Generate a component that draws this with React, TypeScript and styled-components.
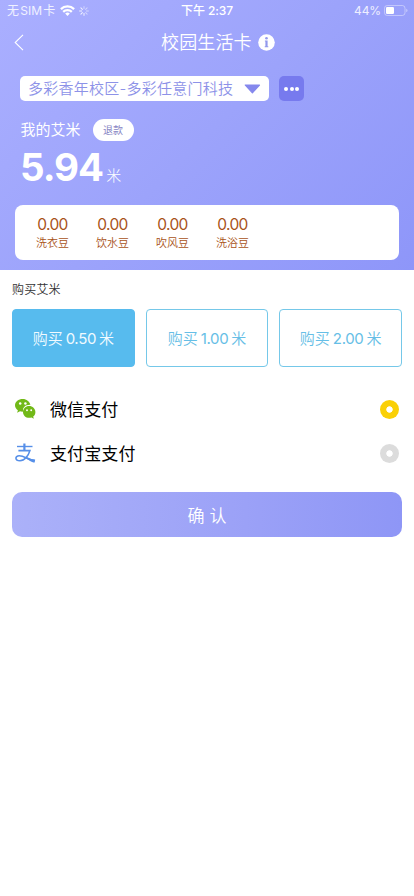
import React, { useState } from 'react';
import styled, { createGlobalStyle } from 'styled-components';

const GlobalStyle = createGlobalStyle`
  * { box-sizing: border-box; }
  body {
    margin: 0;
    background: #fff;
    font-family: Inter, "Noto Sans CJK SC", sans-serif;
  }
  button { font: inherit; border: 0; padding: 0; background: none; color: inherit; }
`;

const Screen = styled.main`
  width: 414px;
  height: 896px;
  background: #fff;
  white-space: nowrap;
  overflow: hidden;
`;

const Hero = styled.header`
  height: 270px;
  color: #fff;
  background: linear-gradient(135deg, #aaafff 0%, #9ca3fb 50%, #8e96f9 100%);
`;

const StatusBar = styled.div`
  height: 21px;
  padding: 0 6px 0 7px;
  display: grid;
  grid-template-columns: 174px auto 1fr;
  align-items: center;
  font-size: 12px;
  line-height: 20px;
`;

const Carrier = styled.div`
  display: flex;
  align-items: center;
  gap: 4px;
  color: #f0f1ff;
`;

const CarrierName = styled.span`
  width: 49px;
  letter-spacing: 0.1px;
  word-spacing: -2.4px;
`;

const Clock = styled.time`
  font-weight: 500;
  letter-spacing: -0.1px;
`;

const Power = styled.div`
  display: flex;
  justify-content: flex-end;
  align-items: center;
  gap: 3px;
  color: #eeefff;
  letter-spacing: -0.1px;
`;

const NavBar = styled.nav`
  height: 43px;
  padding: 0 14px;
  display: grid;
  grid-template-columns: 147px auto 1fr;
  align-items: center;
`;

const Title = styled.h1`
  margin: 0;
  display: flex;
  align-items: center;
  gap: 6px;
  font-size: 18px;
  font-weight: 350;
  line-height: 29px;
  letter-spacing: 0.15px;
`;

const CampusRow = styled.div`
  margin: 12px 0 0 20px;
  display: flex;
  gap: 10px;
`;

const CampusSelect = styled.button`
  width: 249px;
  height: 25px;
  padding: 1px 8px 0;
  display: flex;
  align-items: center;
  justify-content: space-between;
  border-radius: 5px;
  background: #fff;
  color: #8d92e8;
  font-size: 15px;
  font-weight: 350;
  line-height: 24px;
  letter-spacing: 0.25px;
`;

const MoreButton = styled.button`
  width: 25px;
  height: 25px;
  padding-top: 1px;
  display: flex;
  align-items: center;
  justify-content: center;
  gap: 1.5px;
  border-radius: 5px;
  background: #777aee;
`;

const Dot = styled.i`
  width: 4px;
  height: 4px;
  border-radius: 50%;
  background: #fff;
`;

const BalanceHeading = styled.div`
  margin: 18px 0 0 20.5px;
  height: 22px;
  display: flex;
  align-items: center;
  gap: 12px;
  font-size: 15px;
  line-height: 22px;
`;

const RefundButton = styled.button`
  width: 41px;
  height: 22px;
  border-radius: 11px;
  background: #fff;
  color: #8886c4;
  font-size: 10px;
  line-height: 22px;
`;

const Balance = styled.div`
  margin: 5px 0 0 20px;
  height: 42px;
  display: flex;
  align-items: baseline;
  gap: 3px;
  line-height: 42px;
`;

const Amount = styled.strong`
  font-size: 38.5px;
  font-weight: 700;
  letter-spacing: -1px;
`;

const Unit = styled.span`
  font-size: 15px;
  font-weight: 300;
`;

const BeanCard = styled.section`
  margin: 17px 15px 0;
  height: 55px;
  padding: 10px 0 0 7.5px;
  display: flex;
  border-radius: 8px;
  background: #fff;
  color: #a85217;
`;

const Bean = styled.div`
  width: 60px;
  display: flex;
  flex-direction: column;
  align-items: center;
`;

const BeanValue = styled.span`
  font-size: 15.5px;
  line-height: 20px;
  letter-spacing: -0.6px;
`;

const BeanName = styled.span`
  font-size: 11px;
  font-weight: 350;
  line-height: 16px;
`;

const Body = styled.section`
  padding: 10px 12px 0;
`;

const SectionTitle = styled.h2`
  margin: 0;
  font-size: 12px;
  font-weight: 350;
  line-height: 19px;
  letter-spacing: 0.2px;
  color: #333;
`;

const Packs = styled.div`
  margin-top: 10px;
  display: grid;
  grid-template-columns: repeat(3, 1fr);
  gap: 11px;
`;

const Pack = styled.button<{ $active: boolean }>`
  height: 58px;
  padding-top: 1px;
  display: flex;
  align-items: center;
  justify-content: center;
  gap: 3px;
  border: 1px solid ${p => (p.$active ? '#57bbee' : '#75c8e9')};
  border-radius: 4px;
  background: ${p => (p.$active ? '#57bbee' : '#fff')};
  color: ${p => (p.$active ? '#f0faff' : '#66bee6')};
  font-size: 15px;
  font-weight: 350;
  line-height: 21px;
`;

const PackValue = styled.span`
  font-weight: 400;
  letter-spacing: -0.35px;
`;

const PayList = styled.div`
  margin-top: 20px;
`;

const PayRow = styled.button`
  width: 100%;
  height: 44px;
  padding: 0 3px 0 2px;
  display: flex;
  align-items: center;
  color: #000;
  font-size: 17px;
  line-height: 24px;
`;

const PayLabel = styled.span`
  margin-left: 13px;
  flex: 1;
  text-align: left;
  padding-top: 1px;
  letter-spacing: 0.1px;
`;

const Radio = styled.span<{ $on: boolean }>`
  width: 19px;
  height: 19px;
  border-radius: 50%;
  background: radial-gradient(circle, #fff 2.8px, ${p => (p.$on ? '#fad006' : '#dcdcdc')} 3.6px);
`;

const Confirm = styled.button`
  margin-top: 17px;
  width: 100%;
  height: 45px;
  border-radius: 10px;
  background: linear-gradient(90deg, #abb1f9, #9ba1f7 60%, #8e96f6);
  color: #fff;
  font-size: 17px;
  font-weight: 350;
  word-spacing: 0.3px;
`;

const WifiIcon = () => (
  <svg width="15" height="11" viewBox="0 0 15 11" fill="none" stroke="#fff" strokeWidth="2.3">
    <path d="M.9 4.1a9.5 9.5 0 0 1 13.2 0M3.2 6.9a6.2 6.2 0 0 1 8.6 0" />
    <path d="M7.5 11 5.2 8.6a3.3 3.3 0 0 1 4.6 0z" fill="#fff" stroke="none" />
  </svg>
);

const Spinner = () => (
  <svg width="10" height="10" viewBox="-5 -5 10 10" stroke="#fff" strokeWidth="1" strokeLinecap="round">
    {[0, 45, 90, 135, 180, 225, 270, 315].map((a, i) => (
      <path key={a} d="M0-2.3V-4.4" transform={`rotate(${a})`} opacity={i < 4 ? 0.5 : 0.85} />
    ))}
  </svg>
);

const Battery = () => (
  <svg width="24" height="11" viewBox="0 0 24 11">
    <rect x=".5" y=".5" width="20.5" height="10" rx="2.7" fill="none" stroke="#fff" strokeOpacity=".4" />
    <rect x="2" y="2" width="8" height="7" rx="1.2" fill="#fff" />
    <path d="M22.3 3.8c1.6.4 1.6 3 0 3.4z" fill="#fff" fillOpacity=".5" />
  </svg>
);

const BackIcon = () => (
  <svg width="10" height="17" viewBox="0 0 10 17" fill="none" stroke="#fff" strokeWidth="1.1">
    <path d="M9 .8 1.2 8.5 9 16.2" />
  </svg>
);

const InfoIcon = () => (
  <svg width="17" height="17" viewBox="0 0 17 17">
    <circle cx="8.5" cy="8.5" r="8.3" fill="#fff" />
    <circle cx="8.5" cy="4.3" r="1.3" fill="#9299ed" />
    <path d="M6.9 6.6h2.7v5.7h.7v1H6.7v-1h.7V7.6h-.5z" fill="#9299ed" />
  </svg>
);

const Caret = () => (
  <svg width="17" height="10" viewBox="0 0 17 10">
    <path d="M1.3 1h14.2L8.4 8.8z" fill="#8588ed" stroke="#8588ed" strokeWidth="1.2" strokeLinejoin="round" />
  </svg>
);

const WechatIcon = () => (
  <svg width="23" height="22" viewBox="0 0 23 22">
    <path d="M8.8 1C4.5 1 1 3.7 1 7.3c0 2 1.1 3.8 2.9 5l-.8 2.5 2.9-1.5c1 .3 2 .4 3.2.3C8.1 9.4 11.700 6.500 16.400 6.700 15.600 3.500 12.500 1 8.800 1z" fill="#72b918" />
    <path d="M21.400 13.900c0-3.300-2.800-6-6.300-6S9 10.600 9 13.900s2.700 5.900 6.100 5.900c.8 0 1.700-.1 2.400-.4l2.300 1.300-.6-2.200c1.400-1 2.200-2.700 2.200-4.600z" fill="#72b918" />
    <g fill="#fff">
      <circle cx="6.2" cy="5.6" r="1.25" />
      <circle cx="11.4" cy="5.6" r="1.25" />
      <circle cx="13" cy="12.3" r=".95" />
      <circle cx="17.2" cy="12.3" r=".95" />
    </g>
  </svg>
);

const AlipayIcon = () => (
  <svg width="23" height="22" viewBox="0 0 23 22" fill="none" stroke="#568fe8">
    <path d="M3 4.5h15.5" strokeWidth="1.4" />
    <path d="M10.400 1.500v7" strokeWidth="2.200" />
    <path d="M4.400 8.600h11.500c-1.400 4.800-5.200 10.200-10 10.200-5.100 0-5.200-5-.7-5 5.400 0 8.800 4.100 15.800 4.800" strokeWidth="1.600" />
    <path d="M12.500 15.100c2.600 1.200 4.900 2.300 8.700 2.600l-.8 3c-3.500-.3-5.300-2.400-8.300-4.100z" fill="#568fe8" stroke="none" />
  </svg>
);

const beans = ['洗衣豆', '饮水豆', '吹风豆', '洗浴豆'];
const packs = ['0.50', '1.00', '2.00'];
const methods = [
  { label: '微信支付', Icon: WechatIcon },
  { label: '支付宝支付', Icon: AlipayIcon },
];

export default function App() {
  const [pack, setPack] = useState(0);
  const [method, setMethod] = useState(0);
  return (
    <Screen>
      <GlobalStyle />
      <Hero>
        <StatusBar>
          <Carrier>
            <CarrierName>无 SIM 卡</CarrierName>
            <WifiIcon />
            <Spinner />
          </Carrier>
          <Clock>下午 2:37</Clock>
          <Power>44%<Battery /></Power>
        </StatusBar>
        <NavBar>
          <BackIcon />
          <Title>校园生活卡<InfoIcon /></Title>
        </NavBar>
        <CampusRow>
          <CampusSelect>多彩香年校区-多彩任意门科技<Caret /></CampusSelect>
          <MoreButton><Dot /><Dot /><Dot /></MoreButton>
        </CampusRow>
        <BalanceHeading>我的艾米<RefundButton>退款</RefundButton></BalanceHeading>
        <Balance><Amount>5.94</Amount><Unit>米</Unit></Balance>
        <BeanCard>
          {beans.map(name => (
            <Bean key={name}><BeanValue>0.00</BeanValue><BeanName>{name}</BeanName></Bean>
          ))}
        </BeanCard>
      </Hero>
      <Body>
        <SectionTitle>购买艾米</SectionTitle>
        <Packs>
          {packs.map((value, i) => (
            <Pack key={value} $active={i === pack} onClick={() => setPack(i)}>
              <span>购买</span><PackValue>{value}</PackValue><span>米</span>
            </Pack>
          ))}
        </Packs>
        <PayList>
          {methods.map(({ label, Icon }, i) => (
            <PayRow key={label} onClick={() => setMethod(i)}>
              <Icon /><PayLabel>{label}</PayLabel><Radio $on={i === method} />
            </PayRow>
          ))}
        </PayList>
        <Confirm>确 认</Confirm>
      </Body>
    </Screen>
  );
}
